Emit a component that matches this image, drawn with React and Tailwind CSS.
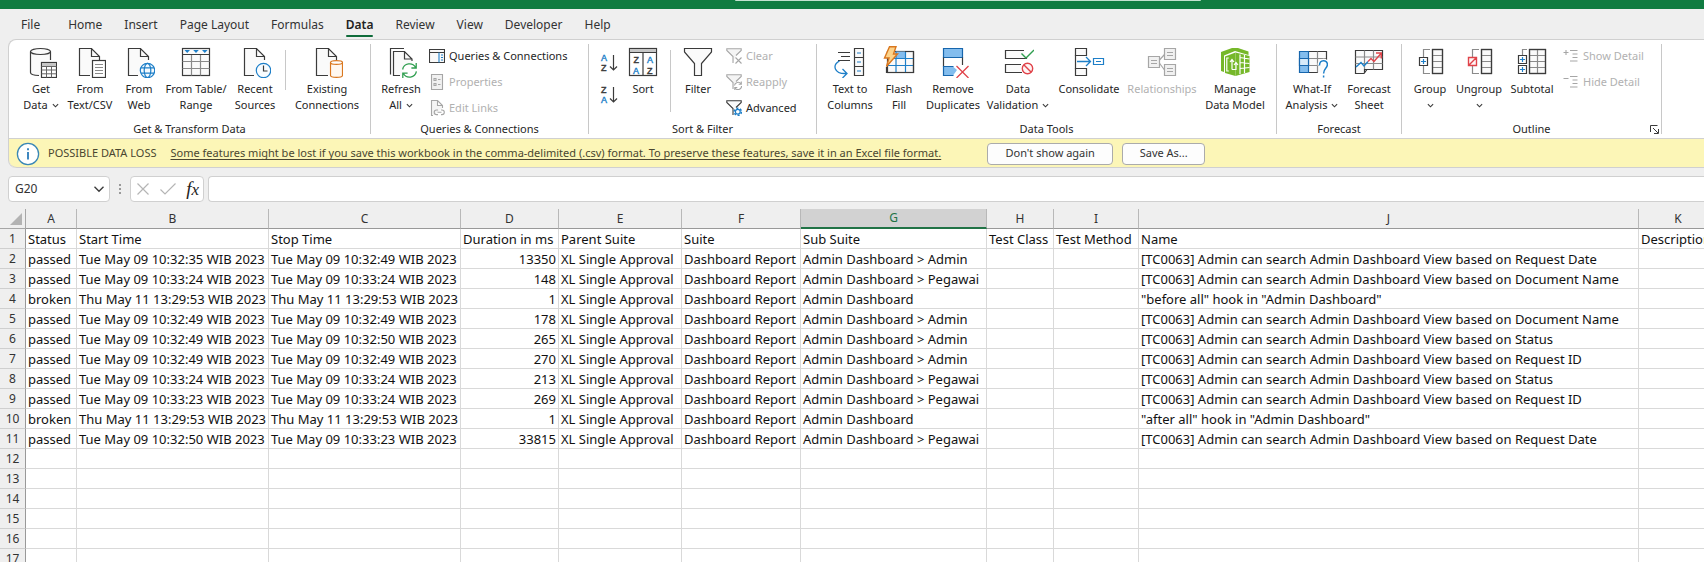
import React from "react";

const ink = "#3b3b3b";
const paper = "#fafafa";
const gray = "#8a8a8a";
const blue = "#1e7fc8";
const pale = "#a6a6a6";

const Icon = ({ children }) => (
  <svg className="block h-8 w-8 shrink-0" viewBox="0 0 32 32" fill="none" stroke={ink} strokeWidth="1.2" aria-hidden="true">
    {children}
  </svg>
);

const SmallIcon = ({ children }) => (
  <svg className="block h-4 w-4 shrink-0" viewBox="0 0 16 16" fill="none" stroke={pale} strokeWidth="1.1" aria-hidden="true">
    {children}
  </svg>
);

const Page = ({ end = 18 }) => (
  <>
    <path d="M5.5 29.5V2.5H17.5L25.5 10.5V14L18 18V29.5Z" fill={paper} stroke="none" />
    <path d={`M${end} 29.5H5.5V2.5H17.5L25.5 10.5V14M17.5 2.5V10.5H25.5`} />
  </>
);

const GetDataIcon = () => (
  <Icon>
    <path d="M5.5 5.5V26C5.5 28 9 29.3 16 29.3V16H25.5V5.5" fill={paper} stroke="none" />
    <ellipse cx="15.5" cy="5.5" rx="10" ry="3" fill={paper} />
    <path d="M5.5 5.5V26.5C5.5 28.2 9 29.4 14 29.5M25.5 5.5V14" />
    <rect x="16.5" y="16.5" width="15" height="15" fill="#fff" />
    <rect x="17" y="17" width="14" height="3" fill="#c6c6c6" stroke="none" />
    <path d="M16.5 20.5H31.5M16.5 24H31.5M16.5 27.8H31.5M21.5 20.5V31.5M26.5 20.5V31.5" stroke="#666" strokeWidth="1" />
  </Icon>
);
const TextCsvIcon = () => (
  <Icon>
    <Page end={16} />
    <rect x="18.5" y="14.5" width="13" height="17" fill="#fff" />
    <path d="M21 18.5H29M21 21.5H29M21 24.5H29M21 27.5H29" stroke={gray} />
  </Icon>
);
const WebIcon = () => (
  <Icon>
    <Page end={15} />
    <circle cx="24.5" cy="24.5" r="7.2" fill="#f4fafe" stroke={blue} />
    <ellipse cx="24.5" cy="24.5" rx="3.3" ry="7.2" stroke={blue} />
    <path d="M18 21.8H31M18 27.2H31" stroke={blue} />
  </Icon>
);
const TableIcon = () => (
  <Icon>
    <rect x="2.5" y="2.5" width="27" height="27" fill={paper} />
    <path d="M11.5 8.5V29.5M20.5 8.5V29.5M2.5 15.5H29.5M2.5 22.5H29.5" stroke={gray} />
    <path d="M2.5 8.5H29.5" />
    <path d="M4.5 4H10L7.2 7ZM13.2 4H18.8L16 7ZM22 4H27.6L24.8 7Z" fill={blue} stroke="none" />
  </Icon>
);
const RecentIcon = () => (
  <Icon>
    <Page end={15} />
    <circle cx="24.5" cy="24.5" r="7.2" fill="#f8fcff" stroke={blue} />
    <path d="M24.5 19.5V25H28.5" />
  </Icon>
);
const ExistingIcon = () => (
  <Icon>
    <Page end={17} />
    <path d="M19.5 16.5V29.5C19.5 32 31.5 32 31.5 29.5V16.5" fill="#fff8f0" stroke="#d9771f" />
    <ellipse cx="25.5" cy="16.5" rx="6" ry="1.9" fill="#fff" stroke="#d9771f" />
  </Icon>
);
const RefreshIcon = () => (
  <Icon>
    <path d="M5.5 28.5V2.5H19" />
    <path d="M8.5 29.5V5.5H19.5L27 13V17L17 22V29.5Z" fill={paper} stroke="none" />
    <path d="M15 29.5H8.5V5.5H19.5L27 13V15M19.5 5.5V13H27" />
    <path d="M17.6 23.5A7 7 0 0 1 30.6 21.5M31.4 25.5A7 7 0 0 1 18.4 27.5M31.2 17V22H26.4M17.8 32V27.2H22.6" stroke="#2f9e4f" strokeWidth="1.3" />
  </Icon>
);
const letter = { fontFamily: "'Liberation Sans', sans-serif", fontSize: 9, lineHeight: 1 };
const SortAsc = ({ flip }) => (
  <svg className="block h-5 w-5" viewBox="0 0 20 20" aria-hidden="true">
    <g style={letter} strokeWidth="0.4">
      <text x="2" y="8" fill={flip ? ink : blue} stroke={flip ? ink : blue}>{flip ? "Z" : "A"}</text>
      <text x="2" y="18" fill={flip ? blue : ink} stroke={flip ? blue : ink}>{flip ? "A" : "Z"}</text>
    </g>
    <path d="M14.5 2V17M11 13.5L14.5 17L18 13.5" fill="none" stroke={ink} strokeWidth="1.2" />
  </svg>
);
const SortIcon = () => (
  <Icon>
    <rect x="2.5" y="2.5" width="27" height="27" fill="#fff" />
    <rect x="3" y="3" width="26" height="3" fill="#c6c6c6" stroke="none" />
    <path d="M2.5 6.5H29.5M16 6.5V29.5" />
    <g style={letter} strokeWidth="0.4">
      <text x="6.5" y="17" fill={ink} stroke={ink}>Z</text>
      <text x="20" y="17" fill={blue} stroke={blue}>A</text>
      <text x="6" y="27.5" fill={blue} stroke={blue}>A</text>
      <text x="20" y="27.5" fill={ink} stroke={ink}>Z</text>
    </g>
  </Icon>
);
const FilterIcon = () => (
  <Icon>
    <path d="M2.5 2.5H29.5V6L19.5 17.5V29.5H12.5V17.5L2.5 6Z" fill={paper} />
  </Icon>
);
const TextColumnsIcon = () => (
  <Icon>
    <path d="M4 6.5H16M7 10.5H16M4 14.5H16" />
    <path d="M5.5 15C-2 19 0 28 12 27.5M8.5 23L13 27.5L8.5 32" stroke={blue} strokeWidth="1.3" />
    <path d="M20.5 2.5H29.5V29.5H20.5ZM20.5 11.5H29.5M20.5 20.5H29.5" fill={paper} />
    <path d="M23 7H27M23 16H27M23 25H27" stroke={blue} />
  </Icon>
);
const FlashIcon = () => (
  <Icon>
    <rect x="4.5" y="5.5" width="26" height="21" fill={paper} />
    <rect x="13" y="5.5" width="10" height="7" fill="#83bdee" stroke="none" />
    <path d="M4.5 12.5H30.5M4.5 19.5H30.5M13 5.5V26.5M22.5 5.5V26.5" stroke={blue} />
    <path d="M30.5 5.5V26.5H3.5V21M22 5.5H30.5" />
    <path d="M6.5 .7H13L10.5 8H14.5L3.5 20.5L6 12H1.5Z" fill="#fcd38a" stroke="#d9771f" strokeWidth="1.4" />
  </Icon>
);
const RemoveDupIcon = () => (
  <Icon>
    <path d="M6.5 2.5H25.5V11.5H6.5Z" fill="#83bdee" stroke="#1766ad" />
    <path d="M6.5 20.5H16L20 24L16 29.5H6.5Z" fill="#83bdee" stroke="none" />
    <path d="M6.5 11.5V20.5M25.5 11.5V19" />
    <path d="M16.5 20.5H6.5V29.5H16.5" stroke="#1766ad" />
    <path d="M19.5 20L31.5 32M31.5 20L19.5 32" stroke="#e0434a" strokeWidth="1.3" />
  </Icon>
);
const ValidationIcon = () => (
  <Icon>
    <path d="M22 4.5H3.5V12.5H24.5V12M19 18.5H3.5V26.5H20" fill={paper} />
    <path d="M19.5 7.5L24 12L32 4" stroke="#2f9e4f" strokeWidth="1.4" />
    <circle cx="25.5" cy="22.5" r="5.2" fill="#fff4f4" stroke="#e0434a" strokeWidth="1.4" />
    <path d="M22 19L29 26" stroke="#e0434a" strokeWidth="1.4" />
  </Icon>
);
const ConsolidateIcon = () => (
  <Icon>
    <path d="M2.5 2.5H13.5V9.5H2.5ZM2.5 22.5H13.5V29.5H2.5Z" fill={paper} />
    <path d="M2.5 9V23" />
    <path d="M4 15.5H17.5M13 11L17.5 15.5L13 20" stroke={blue} strokeWidth="1.3" />
    <path d="M20.5 12.5H30.5V18.5H20.5ZM23 15.5H28" stroke={blue} />
  </Icon>
);
const RelationshipsIcon = () => (
  <Icon>
    <g stroke={pale} fill="#f1f1f1">
      <path d="M13 14.5L18.5 8.5M13 16.5L18.5 24" />
      <path d="M2.5 10.5H13.5V21.5H2.5ZM18.5 2.5H29.5V13.5H18.5ZM18.5 18.5H29.5V29.5H18.5Z" />
      <path d="M5 14.5H11M5 17.5H11M21 6.5H27M21 9.5H27M21 22.5H27M21 25.5H27" />
    </g>
  </Icon>
);
const ModelIcon = () => (
  <Icon>
    <path d="M2 10V6L13 2H19L29.5 5.5V9L16 5L5 9.5V26L2 25Z" fill="#76b82a" stroke="none" />
    <path d="M6 10.5L16.5 6.5V30L6 27Z" fill="#76b82a" stroke="none" />
    <path d="M16.5 6.5L30.5 10V26L16.5 30Z" fill="#76b82a" stroke="none" />
    <path d="M21 11.5L30.5 13M21 16.5L30.5 17.5M21 22.5L30.5 21.5M21 8.5V28M25.5 9V27" stroke="#fff" strokeWidth="1.2" />
    <path d="M9.8 12H7.8V25H9.8M13 23.5V14M11 16L13 13.5L15 16M13 23.5H17V17M15 19L17 16.5L19 19" stroke="#fff" strokeWidth="1.2" />
  </Icon>
);
const WhatIfIcon = () => (
  <Icon>
    <rect x="3.5" y="5.5" width="27" height="21" fill={paper} stroke="none" />
    <path d="M12 5.5H30.5V14M12 26.5H22" />
    <path d="M12 12.5H30M12 19.5H23M21.5 5.5V26.5" stroke={gray} />
    <path d="M3.5 5.5H12.5V26.5H3.5Z" fill="#83bdee" stroke="#1766ad" />
    <path d="M3.5 12.5H12.5V19.5H3.5Z" fill="#d6eafa" stroke="#1766ad" />
    <path d="M23.5 19.5C23.5 13 31.4 13.5 31.4 18.5C31.4 22.5 27.6 22 27.6 27.5" stroke="#fff" strokeWidth="4" />
    <path d="M23.5 19.5C23.5 13 31.4 13.5 31.4 18.5C31.4 22.5 27.6 22 27.6 27.5M27.6 29.5V31.5" stroke={blue} strokeWidth="1.5" />
  </Icon>
);
const ForecastIcon = () => (
  <Icon>
    <path d="M2.5 4.5H29.5V23.5H14L11 27.5H2.5Z" fill={paper} />
    <path d="M11.5 4.5V23M20.5 4.5V23.5M2.5 11H29.5M2.5 17.5H29.5" stroke={gray} />
    <path d="M14 23.5H11.5V27" />
    <path d="M3 21L8 16.5L11 20L15 15.5" stroke={blue} strokeWidth="1.4" />
    <path d="M15 15.5L18 12.5L21 15.5L28 7.5M23 7H28.3V12.5" stroke="#e0434a" strokeWidth="1.4" />
  </Icon>
);
const Grid = ({ x, w, mid }) => (
  <>
    <rect x={x} y="3.5" width={w} height="24" fill={paper} />
    <path d={`M${x} 9.5H${x + w}M${x} 15.5H${x + w}M${x} 21.5H${x + w}`} stroke={gray} />
    {mid && <path d={`M${x + w / 2} 3.5V27.5`} stroke={gray} />}
    <rect x={x} y="3.5" width={w} height="24" />
  </>
);
const GroupIcon = () => (
  <Icon>
    <Grid x={18.5} w={10} />
    <path d="M16 3.5H9.5V11M16 27.5H9.5V20" stroke={gray} />
    <path d="M5.5 11.5H13.5V19.5H5.5Z" />
    <path d="M9.5 13V18M7 15.5H12" stroke={blue} />
  </Icon>
);
const UngroupIcon = () => (
  <Icon>
    <Grid x={18.5} w={10} />
    <path d="M16 3.5H9.5V11M16 27.5H9.5V20" stroke={gray} />
    <path d="M5.5 11.5H13.5V19.5H5.5ZM5.5 19.5L13.5 11.5" stroke="#e0434a" strokeWidth="1.4" fill="#fff4f4" />
  </Icon>
);
const SubtotalIcon = () => (
  <Icon>
    <Grid x={13.5} w={16} mid />
    <path d="M11 3.5H6.5V9" stroke={gray} />
    <path d="M2.5 9.5H10.5V17.5H2.5ZM2.5 19.5H10.5V27.5H2.5Z" />
    <path d="M6.5 11V16M4 13.5H9M6.5 21V26M4 23.5H9" stroke={blue} />
  </Icon>
);

const QueriesIcon = () => (
  <SmallIcon>
    <path d="M.5 1.5H15.5V14.5H.5ZM.5 4.5H15.5" stroke={ink} fill={paper} />
    <path d="M10 4.5V14.5M12 7H14M12 9.5H14M12 12H14" stroke={blue} />
  </SmallIcon>
);
const PropertiesIcon = () => (
  <SmallIcon>
    <path d="M2.5 .5H13.5V15.5H2.5Z" fill="#f1f1f1" />
    <path d="M5 4.5H7V6.5H5ZM5 9.5H7V11.5H5ZM9 5.5H11.5M9 10.5H11.5" />
  </SmallIcon>
);
const LinksIcon = () => (
  <SmallIcon>
    <path d="M4 15.5H2.5V.5H8.5L13.5 5.5V8M8.5 .5V5.5H13.5" fill="#f4f4f4" />
    <path d="M9 10H7.5A2.3 2.3 0 0 0 7.5 14.6H9M12 10H13A2.3 2.3 0 0 1 13 14.6H12M8.5 12.3H12.5" />
  </SmallIcon>
);
const funnel = "M7 15V8.5L.8 2.5V.8H15.2V2.5L10 7.5";
const ClearIcon = () => (
  <SmallIcon>
    <path d={funnel} fill="#f4f4f4" />
    <path d="M9.5 9.5L15.5 15.5M15.5 9.5L9.5 15.5" />
  </SmallIcon>
);
const ReapplyIcon = () => (
  <SmallIcon>
    <path d={funnel} fill="#f4f4f4" />
    <path d="M8.5 11.5A3.6 3.6 0 0 1 15 9.8M15.6 12A3.6 3.6 0 0 1 9 14M15.3 7.5V10.3H12.7M8.8 16V13.5H11.3" />
  </SmallIcon>
);
const AdvancedIcon = () => (
  <SmallIcon>
    <path d={funnel} stroke={ink} fill={paper} />
    <circle cx="11.8" cy="11.8" r="3.6" stroke={blue} strokeWidth="1.6" strokeDasharray="2 1.77" />
    <circle cx="11.8" cy="11.8" r="2.4" stroke={blue} strokeWidth="1.2" fill="#fff" />
  </SmallIcon>
);
const DetailIcon = ({ plus }) => (
  <SmallIcon>
    <path d={plus ? "M.5 4.5H5.5M3 2V7" : "M.5 4.5H5.5"} />
    <path d="M7 2.5H14.5M9.5 6H14.5M9.5 9.5H14.5M7 13H14.5" />
  </SmallIcon>
);

const Chevron = ({ className, weight = 1.3 }) => (
  <svg className={className} viewBox="0 0 8 8" fill="none" stroke={ink} strokeWidth={weight} aria-hidden="true">
    <path d="M1 2.5L4 5.5L7 2.5" />
  </svg>
);

function BigButton({ icon, lines, drop, disabled, width }) {
  return (
    <button type="button" disabled={disabled} className={`flex shrink-0 flex-col items-center gap-[3px] whitespace-nowrap ${width} ${disabled ? "text-[#b1b1b1]" : "text-[#262626]"}`}>
      {icon}
      <span className="flex flex-col items-center">
        {lines.map((line, i) => (
          <span key={line} className="flex h-4 items-center gap-1">
            {line}
            {drop && i === 1 && <Chevron className="h-[7px] w-[7px]" />}
          </span>
        ))}
        {drop && lines.length === 1 && (
          <span className="flex h-4 items-center"><Chevron className="h-[7px] w-[7px]" /></span>
        )}
      </span>
    </button>
  );
}

function SmallButton({ icon, label, disabled }) {
  return (
    <button type="button" disabled={disabled} className={`flex h-5 items-center gap-1 whitespace-nowrap ${disabled ? "text-[#b1b1b1]" : "text-[#262626]"}`}>
      {icon}
      {label}
    </button>
  );
}

function Group({ label, width, children, launcher }) {
  return (
    <section aria-label={label} className={`flex shrink-0 flex-col ${width}`}>
      <div className="flex h-[81px] items-start pt-1.5">{children}</div>
      <div className="relative flex h-4 items-center justify-center">
        {label}
        {launcher && (
          <button type="button" aria-label="Outline settings" className="absolute right-0.5 top-1">
            <svg className="block h-[9px] w-[9px]" viewBox="0 0 9 9" fill="none" stroke={ink}>
              <path d="M.5 7V.5H7.5M3 3L8 8M8.5 4V8.5H4" />
            </svg>
          </button>
        )}
      </div>
    </section>
  );
}

const Divider = () => <div className="my-1 w-px shrink-0 bg-[#c8c8c8]" />;
const Stack = ({ children, className = "" }) => <div className={`flex flex-col gap-1.5 ${className}`}>{children}</div>;

const tabs = ["File", "Home", "Insert", "Page Layout", "Formulas", "Data", "Review", "View", "Developer", "Help"];

function Tabs() {
  return (
    <nav className="flex h-[30px] items-center gap-[22px] pl-[21px] pt-0.5 text-[12px] text-[#333]">
      {tabs.map((t) => (
        <button
          key={t}
          type="button"
          className={`relative whitespace-nowrap leading-6 ${t === "File" ? "mr-1.5" : ""} ${t === "Data" ? "font-semibold text-[#222]" : ""}`}
        >
          {t}
          {t === "Data" && <span className="absolute inset-x-0 bottom-0 h-0.5 rounded-full bg-[#0f6b3a]" />}
        </button>
      ))}
    </nav>
  );
}

function Ribbon() {
  return (
    <div className="flex h-[98px] overflow-hidden rounded-tl-lg bg-white text-[11px] leading-4 text-[#262626]">
      <Group label="Get & Transform Data" width="w-[361px]">
        <div className="w-2 shrink-0" />
        <BigButton width="w-12" icon={<GetDataIcon />} lines={["Get", "Data"]} drop />
        <BigButton width="w-[50px]" icon={<TextCsvIcon />} lines={["From", "Text/CSV"]} />
        <BigButton width="w-12" icon={<WebIcon />} lines={["From", "Web"]} />
        <BigButton width="w-[66px]" icon={<TableIcon />} lines={["From Table/", "Range"]} />
        <BigButton width="w-[52px]" icon={<RecentIcon />} lines={["Recent", "Sources"]} />
        <div className="mx-1 mt-1 h-10 w-px shrink-0 bg-[#c8c8c8]" />
        <BigButton width="w-[74px]" icon={<ExistingIcon />} lines={["Existing", "Connections"]} />
      </Group>
      <Divider />
      <Group label="Queries & Connections" width="w-[217px]">
        <div className="w-[5px] shrink-0" />
        <BigButton width="w-[50px]" icon={<RefreshIcon />} lines={["Refresh", "All"]} drop />
        <Stack className="pl-[3px]">
          <SmallButton icon={<QueriesIcon />} label="Queries & Connections" />
          <SmallButton icon={<PropertiesIcon />} label="Properties" disabled />
          <SmallButton icon={<LinksIcon />} label="Edit Links" disabled />
        </Stack>
      </Group>
      <Divider />
      <Group label="Sort & Filter" width="w-[227px]">
        <div className="flex flex-col gap-3 pl-[10px] pt-[7px]">
          <button type="button" aria-label="Sort A to Z"><SortAsc /></button>
          <button type="button" aria-label="Sort Z to A"><SortAsc flip /></button>
        </div>
        <BigButton width="w-12" icon={<SortIcon />} lines={["Sort"]} />
        <div className="ml-[3px] mr-[3px] mt-1 h-[62px] w-px shrink-0 bg-[#c8c8c8]" />
        <BigButton width="w-12" icon={<FilterIcon />} lines={["Filter"]} />
        <Stack className="pl-1">
          <SmallButton icon={<ClearIcon />} label="Clear" disabled />
          <SmallButton icon={<ReapplyIcon />} label="Reapply" disabled />
          <SmallButton icon={<AdvancedIcon />} label="Advanced" />
        </Stack>
      </Group>
      <Divider />
      <Group label="Data Tools" width="w-[459px]">
        <div className="w-2 shrink-0" />
        <BigButton width="w-[50px]" icon={<TextColumnsIcon />} lines={["Text to", "Columns"]} />
        <BigButton width="w-12" icon={<FlashIcon />} lines={["Flash", "Fill"]} />
        <BigButton width="w-[60px]" icon={<RemoveDupIcon />} lines={["Remove", "Duplicates"]} />
        <BigButton width="w-[70px]" icon={<ValidationIcon />} lines={["Data", "Validation"]} drop />
        <BigButton width="w-[72px]" icon={<ConsolidateIcon />} lines={["Consolidate"]} />
        <BigButton width="w-[74px]" icon={<RelationshipsIcon />} lines={["Relationships"]} disabled />
        <BigButton width="w-[72px]" icon={<ModelIcon />} lines={["Manage", "Data Model"]} />
      </Group>
      <Divider />
      <Group label="Forecast" width="w-[124px]">
        <div className="w-1 shrink-0" />
        <BigButton width="w-[62px]" icon={<WhatIfIcon />} lines={["What-If", "Analysis"]} drop />
        <BigButton width="w-[52px]" icon={<ForecastIcon />} lines={["Forecast", "Sheet"]} />
      </Group>
      <Divider />
      <Group label="Outline" width="w-[259px]" launcher>
        <div className="w-[5px] shrink-0" />
        <BigButton width="w-[46px]" icon={<GroupIcon />} lines={["Group"]} drop />
        <BigButton width="w-[52px]" icon={<UngroupIcon />} lines={["Ungroup"]} drop />
        <BigButton width="w-[54px]" icon={<SubtotalIcon />} lines={["Subtotal"]} />
        <Stack className="pl-1">
          <SmallButton icon={<DetailIcon plus />} label="Show Detail" disabled />
          <SmallButton icon={<DetailIcon />} label="Hide Detail" disabled />
        </Stack>
      </Group>
      <Divider />
    </div>
  );
}

function Banner() {
  return (
    <div className="flex h-[30px] items-center whitespace-nowrap rounded-bl-lg border-y border-[#d0d0d0] bg-[#fcf6b7] pl-[7px] pt-px text-[11px] text-[#4a4630]">
      <svg className="mr-2 block h-6 w-6 shrink-0" viewBox="0 0 24 24" aria-hidden="true">
        <circle cx="12" cy="12" r="10.6" fill="#fff" stroke="#3a87b5" strokeWidth="1.3" />
        <path d="M12 10V17.5M12 6.2V8.2" stroke="#2a7ab8" strokeWidth="1.8" />
      </svg>
      <span className="mr-3.5">POSSIBLE DATA LOSS</span>
      <span className="underline underline-offset-2">
        Some features might be lost if you save this workbook in the comma-delimited (.csv) format. To preserve these features, save it in an Excel file format.
      </span>
      <button type="button" className="ml-[46px] h-[22px] w-[126px] rounded border border-[#ababab] bg-[#fdfdfd] text-[#333]">Don't show again</button>
      <button type="button" className="ml-[9px] h-[22px] w-[83px] rounded border border-[#ababab] bg-[#fdfdfd] text-[#333]">Save As...</button>
    </div>
  );
}

function FormulaBar() {
  return (
    <div className="mt-2 flex h-[26px] items-stretch pl-2">
      <div className="flex w-[102px] items-center rounded border border-[#d0d0d0] bg-white pl-1.5 pr-1">
        <input aria-label="Name box" defaultValue="G20" className="w-0 flex-1 bg-transparent text-[12px] text-[#333] outline-none" />
        <button type="button" aria-label="Open name list"><Chevron className="block h-3 w-3" weight={0.9} /></button>
      </div>
      <div className="flex w-5 flex-col items-center justify-center gap-0.5">
        <span className="h-0.5 w-0.5 bg-[#999]" />
        <span className="h-0.5 w-0.5 bg-[#999]" />
        <span className="h-0.5 w-0.5 bg-[#999]" />
      </div>
      <div className="flex w-[74px] items-center justify-between rounded border border-[#d0d0d0] bg-white pl-1.5 pr-1">
        <button type="button" aria-label="Cancel">
          <svg className="block h-3 w-3" viewBox="0 0 12 12" fill="none" stroke="#b5b5b5" strokeWidth="1.2"><path d="M.5 .5L11.5 11.5M11.5 .5L.5 11.5" /></svg>
        </button>
        <button type="button" aria-label="Enter">
          <svg className="block h-3 w-4" viewBox="0 0 16 12" fill="none" stroke="#b5b5b5" strokeWidth="1.2"><path d="M.5 6.5L5 11L15.5 .5" /></svg>
        </button>
        <button type="button" aria-label="Insert function" className="font-['Liberation_Serif',serif] text-[19px] italic leading-5 text-[#222]">
          f<span className="text-[17px]">x</span>
        </button>
      </div>
      <input aria-label="Formula" className="ml-1 min-w-0 flex-1 rounded-l border border-r-0 border-[#d0d0d0] bg-white px-2 text-[12px] outline-none" />
    </div>
  );
}

const columns = [
  ["A", 51], ["B", 192], ["C", 192], ["D", 98], ["E", 123], ["F", 119], ["G", 186], ["H", 67], ["I", 85], ["J", 500], ["K", 79],
];
const head = ["Status", "Start Time", "Stop Time", "Duration in ms", "Parent Suite", "Suite", "Sub Suite", "Test Class", "Test Method", "Name", "Description"];
const search = "[TC0063] Admin can search Admin Dashboard View based on ";
const runs = [
  ["passed", "Tue May 09 10:32:35", "Tue May 09 10:32:49", 13350, " > Admin", search + "Request Date"],
  ["passed", "Tue May 09 10:33:24", "Tue May 09 10:33:24", 148, " > Pegawai", search + "Document Name"],
  ["broken", "Thu May 11 13:29:53", "Thu May 11 13:29:53", 1, "", '"before all" hook in "Admin Dashboard"'],
  ["passed", "Tue May 09 10:32:49", "Tue May 09 10:32:49", 178, " > Admin", search + "Document Name"],
  ["passed", "Tue May 09 10:32:49", "Tue May 09 10:32:50", 265, " > Admin", search + "Status"],
  ["passed", "Tue May 09 10:32:49", "Tue May 09 10:32:49", 270, " > Admin", search + "Request ID"],
  ["passed", "Tue May 09 10:33:24", "Tue May 09 10:33:24", 213, " > Pegawai", search + "Status"],
  ["passed", "Tue May 09 10:33:23", "Tue May 09 10:33:24", 269, " > Pegawai", search + "Request ID"],
  ["broken", "Thu May 11 13:29:53", "Thu May 11 13:29:53", 1, "", '"after all" hook in "Admin Dashboard"'],
  ["passed", "Tue May 09 10:32:50", "Tue May 09 10:33:23", 33815, " > Pegawai", search + "Request Date"],
];
const rows = [
  head,
  ...runs.map(([status, start, stop, ms, sub, name]) => [
    status, `${start} WIB 2023`, `${stop} WIB 2023`, ms, "XL Single Approval", "Dashboard Report", `Admin Dashboard${sub}`, "", "", name, "",
  ]),
  ...Array.from({ length: 6 }, () => columns.map(() => "")),
];

function Sheet() {
  return (
    <div className="mt-[7px] overflow-hidden">
      <table className="w-[1718px] min-w-full table-fixed border-separate border-spacing-0 text-[13px] leading-[18px] text-[#111]">
        <colgroup>
          <col className="w-[26px]" />
          {columns.map(([c, w]) => <col key={c} style={{ width: w }} />)}
        </colgroup>
        <thead>
          <tr className="h-5">
            <th aria-label="Select all" className="border-b border-r border-[#a6a6a6] p-0">
              <svg className="ml-auto mr-[3px] block h-3 w-3" viewBox="0 0 12 12" aria-hidden="true"><path d="M12 0V12H0Z" fill="#b3b3b3" /></svg>
            </th>
            {columns.map(([c]) => (
              <th
                key={c}
                scope="col"
                className={`border-r border-r-[#b8b8b8] p-0 text-[12px] font-normal ${c === "G" ? "border-b-2 border-b-[#217346] bg-[#d2d2d2] text-[#217346]" : "border-b border-b-[#999] pt-px text-[#333]"}`}
              >
                {c}
              </th>
            ))}
          </tr>
        </thead>
        <tbody>
          {rows.map((cells, r) => (
            <tr key={r} className="h-5">
              <th scope="row" className="border-b border-r border-b-[#cfcfcf] border-r-[#999] bg-[#efefef] p-0 pt-px text-center text-[12px] font-normal text-[#333]">{r + 1}</th>
              {cells.map((v, c) => (
                <td key={c} className={`whitespace-nowrap border-b border-r border-[#d9d9d9] bg-white px-0.5 pb-0 pt-px ${typeof v === "number" ? "text-right" : ""}`}>{v}</td>
              ))}
            </tr>
          ))}
        </tbody>
      </table>
    </div>
  );
}

export default function App() {
  return (
    <div className="h-screen overflow-hidden bg-[#efefef] font-['Noto_Sans','Open_Sans',sans-serif]">
      <header className="flex h-[9px] justify-center bg-[#107c41]">
        <div className="ml-[232px] h-px w-[466px] rounded-b bg-[#c3e3d0]" />
      </header>
      <Tabs />
      <div className="ml-2 overflow-hidden rounded-l-lg border-l border-t border-[#d0d0d0]">
        <Ribbon />
        <Banner />
      </div>
      <FormulaBar />
      <Sheet />
    </div>
  );
}
